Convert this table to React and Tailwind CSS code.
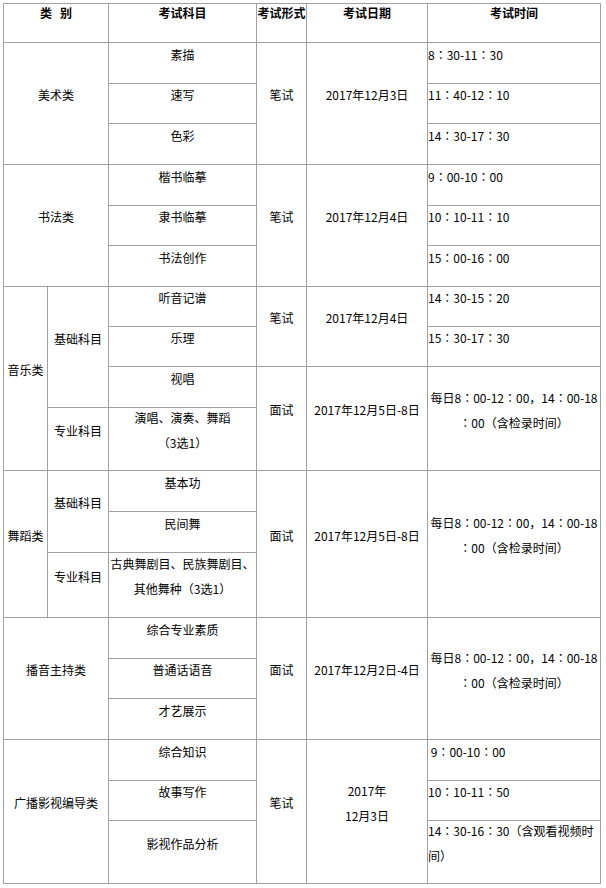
import React from "react";

// full-width colon: the TC face centres it, as in the picture
const fix = (node) =>
  typeof node === "string"
    ? node.split("：").flatMap((part, i) =>
        i === 0
          ? [part]
          : [
              <span key={i} className="[font-family:'Noto_Sans_CJK_TC',sans-serif]">
                ：
              </span>,
              part,
            ]
      )
    : node;

// one cell of the table: place classes + content
const Cell = ({ place, left, children }) => (
  <div
    className={`${place} flex flex-col justify-center bg-white ${
      left ? "items-start text-left" : "items-center text-center"
    }`}
  >
    <div className="pb-[18px] leading-[25px]">
      {React.Children.map(children, fix)}
    </div>
  </div>
);

const Head = ({ children }) => (
  <div className="flex justify-center bg-white font-bold leading-[18px] whitespace-nowrap">
    {children}
  </div>
);

const everyDay = (
  <>
    {fix("每日8：00-12：00，14：00-18")}
    <br />
    {fix("：00（含检录时间）")}
  </>
);

export default function App() {
  return (
    <div className="min-h-[888px] bg-white pt-[3px] pl-[3px] text-[12px] text-black [font-family:'Noto_Sans_CJK_SC',sans-serif]">
      <div className="grid w-max grid-cols-[43px_60px_147px_49px_120px_172px] grid-rows-[38px_40px_39px_40px_40px_39px_40px_39px_39px_40px_62px_40px_40px_64px_40px_39px_40px_40px_39px_62px] gap-px bg-[#a0a0a0] p-px">
        {/* header */}
        <div className="col-span-2 flex justify-center bg-white font-bold leading-[18px] whitespace-pre">
          类   别
        </div>
        <Head>考试科目</Head>
        <Head>考试形式</Head>
        <Head>考试日期</Head>
        <Head>考试时间</Head>

        {/* 美术类 */}
        <Cell place="col-start-1 col-span-2 row-start-2 row-span-3">美术类</Cell>
        <Cell place="col-start-3 row-start-2">素描</Cell>
        <Cell place="col-start-3 row-start-3">速写</Cell>
        <Cell place="col-start-3 row-start-4">色彩</Cell>
        <Cell place="col-start-4 row-start-2 row-span-3">笔试</Cell>
        <Cell place="col-start-5 row-start-2 row-span-3">2017年12月3日</Cell>
        <Cell place="col-start-6 row-start-2" left>8：30-11：30</Cell>
        <Cell place="col-start-6 row-start-3" left>11：40-12：10</Cell>
        <Cell place="col-start-6 row-start-4" left>14：30-17：30</Cell>

        {/* 书法类 */}
        <Cell place="col-start-1 col-span-2 row-start-5 row-span-3">书法类</Cell>
        <Cell place="col-start-3 row-start-5">楷书临摹</Cell>
        <Cell place="col-start-3 row-start-6">隶书临摹</Cell>
        <Cell place="col-start-3 row-start-7">书法创作</Cell>
        <Cell place="col-start-4 row-start-5 row-span-3">笔试</Cell>
        <Cell place="col-start-5 row-start-5 row-span-3">2017年12月4日</Cell>
        <Cell place="col-start-6 row-start-5" left>9：00-10：00</Cell>
        <Cell place="col-start-6 row-start-6" left>10：10-11：10</Cell>
        <Cell place="col-start-6 row-start-7" left>15：00-16：00</Cell>

        {/* 音乐类 */}
        <Cell place="col-start-1 row-start-8 row-span-4">音乐类</Cell>
        <Cell place="col-start-2 row-start-8 row-span-3">基础科目</Cell>
        <Cell place="col-start-2 row-start-11">专业科目</Cell>
        <Cell place="col-start-3 row-start-8">听音记谱</Cell>
        <Cell place="col-start-3 row-start-9">乐理</Cell>
        <Cell place="col-start-3 row-start-10">视唱</Cell>
        <Cell place="col-start-3 row-start-11">
          演唱、演奏、舞蹈
          <br />
          （3选1）
        </Cell>
        <Cell place="col-start-4 row-start-8 row-span-2">笔试</Cell>
        <Cell place="col-start-4 row-start-10 row-span-2">面试</Cell>
        <Cell place="col-start-5 row-start-8 row-span-2">2017年12月4日</Cell>
        <Cell place="col-start-5 row-start-10 row-span-2">2017年12月5日-8日</Cell>
        <Cell place="col-start-6 row-start-8" left>14：30-15：20</Cell>
        <Cell place="col-start-6 row-start-9" left>15：30-17：30</Cell>
        <Cell place="col-start-6 row-start-10 row-span-2">{everyDay}</Cell>

        {/* 舞蹈类 */}
        <Cell place="col-start-1 row-start-12 row-span-3">舞蹈类</Cell>
        <Cell place="col-start-2 row-start-12 row-span-2">基础科目</Cell>
        <Cell place="col-start-2 row-start-14">专业科目</Cell>
        <Cell place="col-start-3 row-start-12">基本功</Cell>
        <Cell place="col-start-3 row-start-13">民间舞</Cell>
        <Cell place="col-start-3 row-start-14">
          古典舞剧目、民族舞剧目、
          <br />
          其他舞种（3选1）
        </Cell>
        <Cell place="col-start-4 row-start-12 row-span-3">面试</Cell>
        <Cell place="col-start-5 row-start-12 row-span-3">2017年12月5日-8日</Cell>
        <Cell place="col-start-6 row-start-12 row-span-3">{everyDay}</Cell>

        {/* 播音主持类 */}
        <Cell place="col-start-1 col-span-2 row-start-15 row-span-3">播音主持类</Cell>
        <Cell place="col-start-3 row-start-15">综合专业素质</Cell>
        <Cell place="col-start-3 row-start-16">普通话语音</Cell>
        <Cell place="col-start-3 row-start-17">才艺展示</Cell>
        <Cell place="col-start-4 row-start-15 row-span-3">面试</Cell>
        <Cell place="col-start-5 row-start-15 row-span-3">2017年12月2日-4日</Cell>
        <Cell place="col-start-6 row-start-15 row-span-3">{everyDay}</Cell>

        {/* 广播影视编导类 */}
        <Cell place="col-start-1 col-span-2 row-start-18 row-span-3">广播影视编导类</Cell>
        <Cell place="col-start-3 row-start-18">综合知识</Cell>
        <Cell place="col-start-3 row-start-19">故事写作</Cell>
        <Cell place="col-start-3 row-start-20">影视作品分析</Cell>
        <Cell place="col-start-4 row-start-18 row-span-3">笔试</Cell>
        <Cell place="col-start-5 row-start-18 row-span-3">
          2017年
          <br />
          12月3日
        </Cell>
        <Cell place="col-start-6 row-start-18" left>
          <span className="whitespace-pre">{fix(" 9：00-10：00")}</span>
        </Cell>
        <Cell place="col-start-6 row-start-19" left>10：10-11：50</Cell>
        <Cell place="col-start-6 row-start-20" left>
          14：30-16：30（含观看视频时
          <br />
          间）
        </Cell>
      </div>
    </div>
  );
}
